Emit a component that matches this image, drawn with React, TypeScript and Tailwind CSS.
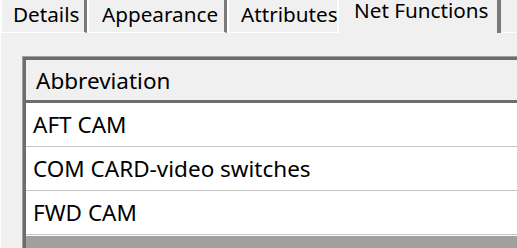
const tabs = [
  { label: "Details", width: "w-[87px]", pad: "pl-[11px]", edge: "border-r-[3px]" },
  { label: "Appearance", width: "w-[140px]", pad: "pl-[13px]", edge: "border-r-[3px]" },
  { label: "Attributes", width: "w-[110px]", pad: "pl-[12px]", edge: "border-r-0" },
];

const rows = ["AFT CAM", "COM CARD-video switches", "FWD CAM"];

export default function App() {
  return (
    <div className="flex h-[248px] w-[517px] flex-col overflow-hidden bg-[#f0f0f0] font-['Noto_Sans',sans-serif] text-black">
      {/* tab strip */}
      <div className="flex h-[33px] shrink-0 text-[20.7px] leading-[22px]">
        {tabs.map((t) => (
          <div
            key={t.label}
            className={`flex ${t.width} shrink-0 overflow-hidden border-b border-l-2 ${t.edge} border-b-white border-l-white border-r-[#7a7a7a] pt-[3px] ${t.pad}`}
          >
            <span className="whitespace-nowrap">{t.label}</span>
          </div>
        ))}
        <div className="flex w-[164px] shrink-0 border-l-2 border-r-4 border-l-white border-r-[#7a7a7a] pl-[15px] leading-[20px]">
          <span className="whitespace-nowrap">Net Functions</span>
        </div>
        <div className="flex-1 border-b border-b-white" />
      </div>

      {/* panel */}
      <div className="flex-1 border-l border-l-white pl-[21px] pt-[23px] text-[22.5px] leading-[22px]">
        <div className="h-full border-l border-t border-[#a0a0a0]">
          <div className="h-full border-l-[3px] border-t-[3px] border-[#6d6d6d] bg-[#a0a0a0]">
            <div className="flex h-[43px] items-center border-b-[3px] border-[#6d6d6d] bg-[#f0f0f0] pl-[10px] pt-[2px]">
              Abbreviation
            </div>
            {rows.map((r) => (
              <div
                key={r}
                className="flex h-[44px] items-center border-b border-[#c4c4c4] bg-white pl-[7px]"
              >
                {r}
              </div>
            ))}
            <div className="h-px bg-white" />
          </div>
        </div>
      </div>
    </div>
  );
}
